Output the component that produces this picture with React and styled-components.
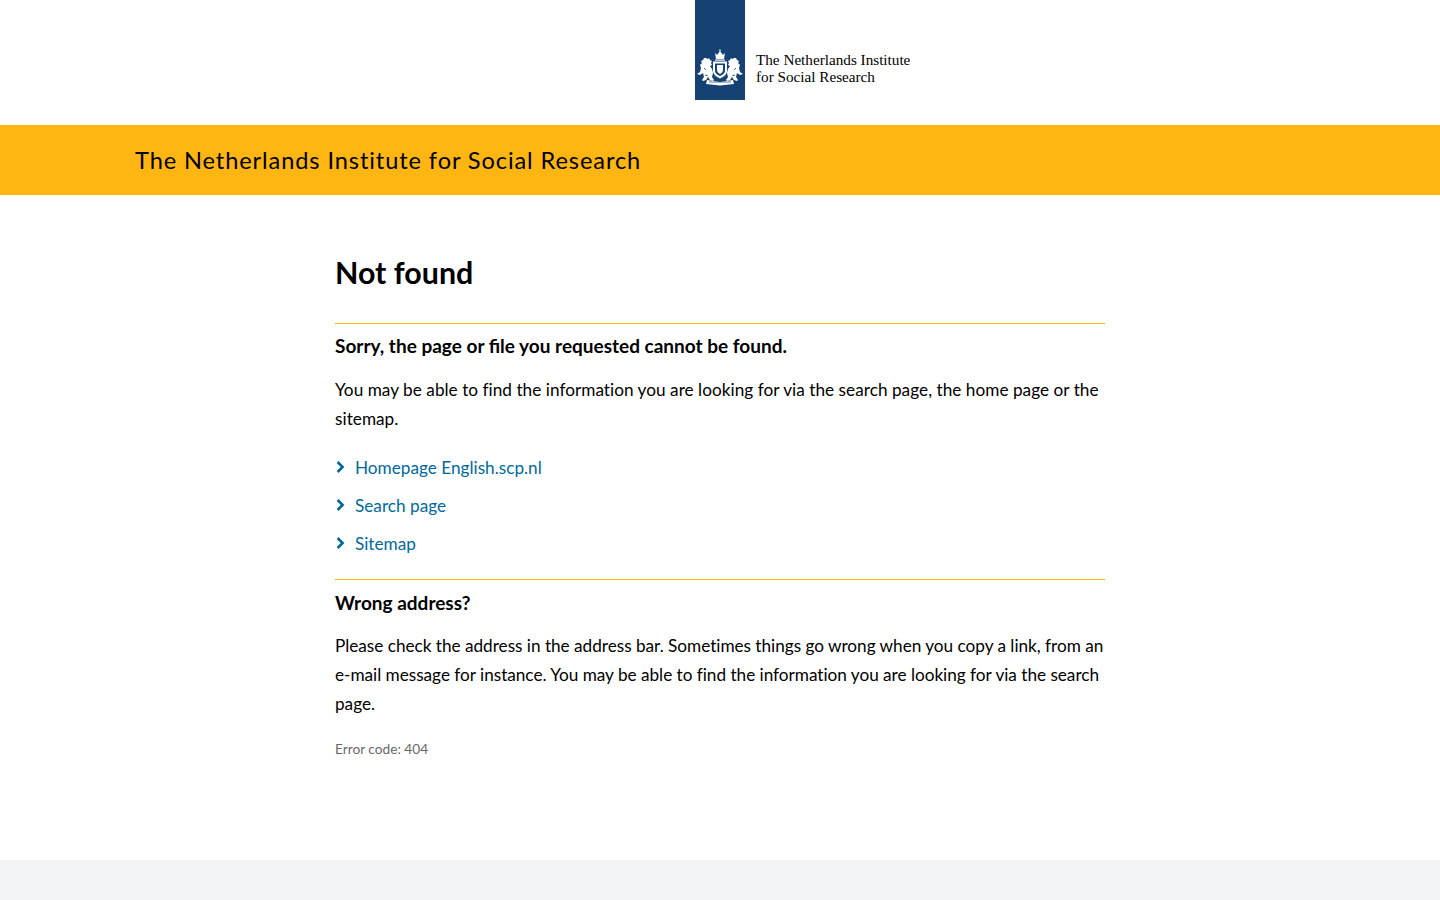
import React from 'react';
import styled, { createGlobalStyle } from 'styled-components';

const GlobalStyle = createGlobalStyle`
  html, body { margin: 0; padding: 0; background: #fff; }
  body { font-family: Lato, "Noto Sans", sans-serif; color: #000; }
`;

const Page = styled.div`
  min-height: 900px;
  display: flex;
  flex-direction: column;
`;

const LogoBar = styled.header`
  height: 125px;
  display: flex;
  padding-left: 695px;
`;

const LogoLink = styled.a`
  display: flex;
  height: 100px;
`;

const Ribbon = styled.div`
  width: 50px;
  height: 100px;
  background: #154273;
  display: flex;
  align-items: flex-end;
  justify-content: center;
  padding-bottom: 13px;
  box-sizing: border-box;
`;

const Wordmark = styled.div`
  margin: 51px 0 0 11px;
  font-family: "Liberation Serif", serif;
  font-size: 15.2px;
  line-height: 17px;
  color: #000;
  white-space: nowrap;
`;

const Banner = styled.div`
  height: 70px;
  background: #ffb612;
  display: flex;
  align-items: center;
  padding-left: 135px;
`;

const BannerTitle = styled.div`
  font-size: 23.6px;
  letter-spacing: 0.9px;
  color: #000;
`;

const Main = styled.main`
  width: 770px;
  margin: 0 auto;
  padding-top: 57px;
  flex: 1;
`;

const Title = styled.h1`
  margin: 0 0 31px;
  font-size: 30.4px;
  line-height: 40px;
  font-weight: 700;
`;

const Section = styled.section`
  border-top: 1px solid #ffb612;
  padding-top: 8px;
`;

const SubTitle = styled.h2`
  margin: ${(p) => (p.$lift ? '-1px 0 15px' : '0 0 14px')};
  font-size: 19px;
  line-height: 29px;
  font-weight: 700;
`;

const Text = styled.p`
  margin: 0 0 15px;
  font-size: 17.2px;
  line-height: 29px;
  letter-spacing: ${(p) => p.$spacing || '0'};
`;

const Links = styled.ul`
  list-style: none;
  margin: 0 0 17px;
  padding: 0;
`;

const LinkRow = styled.li`
  height: 38px;
  display: flex;
  align-items: center;
  gap: 10px;
`;

const Chevron = styled.svg`
  width: 10px;
  height: 14px;
  flex: none;
  margin-top: -1px;
`;

const Link = styled.a`
  font-size: 17.2px;
  color: #01689b;
  text-decoration: none;
`;

const ErrorCode = styled.p`
  margin: 21px 0 0;
  font-size: 13.7px;
  line-height: 20px;
  color: #696969;
`;

const Footer = styled.footer`
  height: 40px;
  background: #f3f4f6;
`;

const lionPath = 'M9 9l2 1 1-1 1 2 2 1-1 2 1 2-2 1 2 3 1 4-1 4 2 3-1 1-3-1-2-3-2 3-3 1-1-1 2-3-1-4-3 2-3-1 3-2 1-4-1-3 2-2-1-2 2-1 1-2z';

const Crest = () => (
  <svg width="46" height="38" viewBox="0 0 46 38" fill="#fff">
    <path d="M23 0l1 2h-2zM18 4l2 2 3-4 3 4 2-2-1 6H19z" />
    <rect x="18" y="10.5" width="10" height="1.2" />
    <path d="M16 12.5h14v9c0 4-3 6-7 8-4-2-7-4-7-8z" />
    <path d="M18 14.5h10v7c0 3-2 4-5 5.5-3-1.500-5-2.500-5-5.500z" fill="#154273" />
    <path d="M20 16h6v5c0 2-1.500 3-3 4-1.500-1-3-2-3-4zM18 14l-1-1h1z" />
    <path d={lionPath} />
    <path d={lionPath} transform="matrix(-1 0 0 1 46 0)" />
    <path d="M7 19l2 2M39 19l-2 2M8 26l3 1M38 26l-3 1" stroke="#154273" strokeWidth="0.8" />
    <path d="M10 31l13 2 13-2 1 4-14 1.500L9 35z" />
    <path d="M12 33h22" stroke="#154273" strokeWidth="0.7" />
  </svg>
);

const ChevronIcon = () => (
  <Chevron viewBox="0 0 10 14">
    <path d="M2.600 2l5 5-5 5" fill="none" stroke="#01689b" strokeWidth="2.600" />
  </Chevron>
);

const App = () => (
  <Page>
    <GlobalStyle />
    <LogoBar>
      <LogoLink>
        <Ribbon><Crest /></Ribbon>
        <Wordmark>The Netherlands Institute<br />for Social Research</Wordmark>
      </LogoLink>
    </LogoBar>
    <Banner>
      <BannerTitle>The Netherlands Institute for Social Research</BannerTitle>
    </Banner>
    <Main>
      <Title>Not found</Title>
      <Section>
        <SubTitle $lift>Sorry, the page or file you requested cannot be found.</SubTitle>
        <Text $spacing="0.03px">You may be able to find the information you are looking for via the search page, the home page or the sitemap.</Text>
        <Links>
          <LinkRow><ChevronIcon /><Link href="#">Homepage English.scp.nl</Link></LinkRow>
          <LinkRow><ChevronIcon /><Link href="#">Search page</Link></LinkRow>
          <LinkRow><ChevronIcon /><Link href="#">Sitemap</Link></LinkRow>
        </Links>
      </Section>
      <Section>
        <SubTitle>Wrong address?</SubTitle>
        <Text $spacing="-0.02px">Please check the address in the address bar. Sometimes things go wrong when you copy a link, from an e-mail message for instance. You may be able to find the information you are looking for via the search page.</Text>
        <ErrorCode>Error code: 404</ErrorCode>
      </Section>
    </Main>
    <Footer />
  </Page>
);

export default App;
